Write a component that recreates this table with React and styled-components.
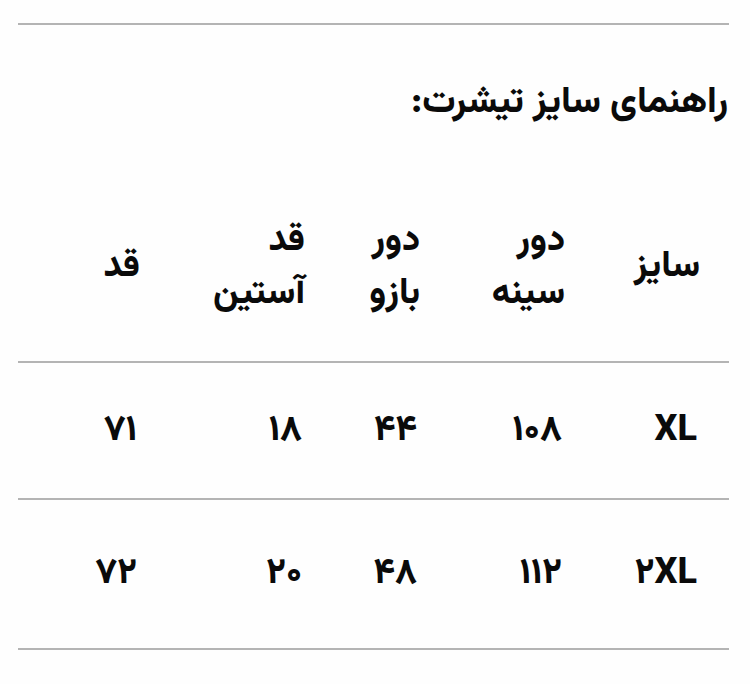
import React from 'react';
import styled, { createGlobalStyle } from 'styled-components';

const GlobalStyle = createGlobalStyle`
  html, body {
    margin: 0;
    padding: 0;
    background: #fefefe;
  }
  body {
    font-family: "Vazirmatn", "DejaVu Sans", sans-serif;
    color: #0a0a0a;
  }
`;

const headers = [
  ['سایز'],
  ['دور', 'سینه'],
  ['دور', 'بازو'],
  ['قد', 'آستین'],
  ['قد'],
];

const rows = [
  ['XL', '۱۰۸', '۴۴', '۱۸', '۷۱'],
  ['۲XL', '۱۱۲', '۴۸', '۲۰', '۷۲'],
];

const columns = '135px 145px 115px 165px 1fr';

function App() {
  return (
    <Page dir='rtl'>
      <GlobalStyle />
      <Rule />
      <Title>راهنمای سایز تیشرت:</Title>
      <Table>
        <HeadRow>
          {headers.map((lines, i) => (
            <HeadCell key={i}>
              {lines.map((line) => (
                <span key={line}>{line}</span>
              ))}
            </HeadCell>
          ))}
        </HeadRow>
        {rows.map((row, r) => (
          <Row key={r}>
            {row.map((value, i) => (
              <Cell key={i} dir={i === 0 ? 'ltr' : 'rtl'}>{value}</Cell>
            ))}
          </Row>
        ))}
      </Table>
    </Page>
  );
}

const Page = styled.div`
  width: 750px;
  height: 684px;
  padding: 23px 21px 0 18px;
  box-sizing: border-box;
`;

const Rule = styled.div`
  height: 2px;
  background: #b4b4b4;
`;

const Title = styled.h1`
  margin: 0;
  padding: 49px 1px 0 0;
  height: 125px;
  box-sizing: border-box;
  font-size: 37px;
  font-weight: 800;
  line-height: 58px;
`;

const Table = styled.div`
  display: flex;
  flex-direction: column;
`;

const HeadRow = styled.div`
  display: grid;
  grid-template-columns: ${columns};
  align-items: center;
  box-sizing: border-box;
  height: 213px;
  padding-top: 24px;
  border-bottom: 2px solid #b4b4b4;
`;

const HeadCell = styled.div`
  display: flex;
  flex-direction: column;
  padding-right: 29px;
  font-size: 36px;
  font-weight: 800;
  line-height: 53px;
`;

const Row = styled.div`
  display: grid;
  grid-template-columns: ${columns};
  align-items: center;
  box-sizing: border-box;
  height: 137px;
  border-bottom: 2px solid #b4b4b4;

  &:last-child {
    height: 150px;
  }
`;

const Cell = styled.div`
  padding-right: 32px;
  font-size: 36px;
  font-weight: 800;
  text-align: right;
`;

export default App;
